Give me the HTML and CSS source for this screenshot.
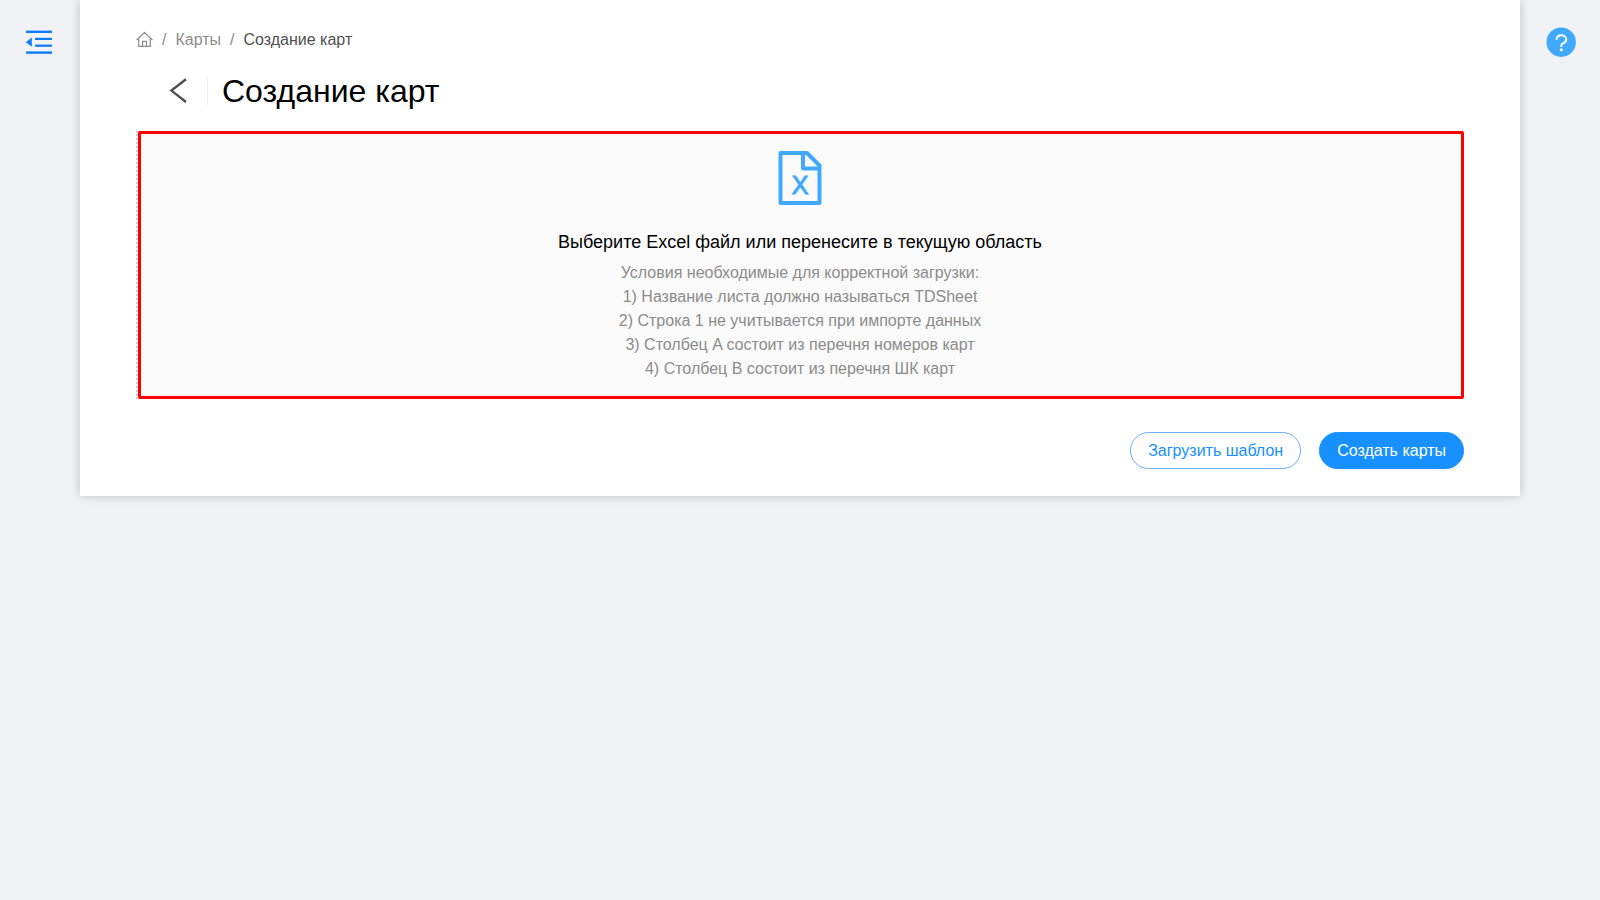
FILE: index.html
```html
<!DOCTYPE html>
<html lang="ru">
<head>
    <meta charset="UTF-8">
    <meta name="viewport" content="width=device-width, initial-scale=1.0">
    <title>Создание карт</title>
    <link rel="stylesheet" href="styles.css">
</head>
<body>
    <div class="layout">
        <aside class="side side-left">
            <button type="button" class="icon-btn" aria-label="Меню">
                <svg width="28" height="26" viewBox="0 0 28 26" fill="#0d7dfb">
                    <rect x="1" y="0.6" width="26" height="2.4"/>
                    <rect x="10" y="7.8" width="17" height="2.2"/>
                    <rect x="10" y="14.6" width="17" height="2.2"/>
                    <rect x="1" y="21.4" width="26" height="2.4"/>
                    <path d="M0.8 12.2L6.8 7.6V16.8z"/>
                </svg>
            </button>
        </aside>

        <main class="card">
            <nav class="breadcrumb">
                <a href="#" class="home" aria-label="Главная">
                    <svg width="17" height="18" viewBox="0 0 17 18" fill="none" stroke="#8c8c8c" stroke-width="1.2">
                        <path d="M2.7 8.4V15.3H14.3V8.4M0.9 8.7L8.5 1.4L16.1 8.7M6.5 15.2V10.4H10.5V15.2" stroke-linecap="round" stroke-linejoin="round"/>
                    </svg>
                </a>
                <span class="separator">/</span>
                <a href="#">Карты</a>
                <span class="separator">/</span>
                <span class="current">Создание карт</span>
            </nav>

            <header class="page-header">
                <button type="button" class="icon-btn back-btn" aria-label="Назад">
                    <svg width="18" height="26" viewBox="0 0 18 26" fill="none" stroke="#505050" stroke-width="2.4">
                        <path d="M17 1.2L2.4 12.6L17 24"/>
                    </svg>
                </button>
                <h1>Создание карт</h1>
            </header>

            <div class="upload">
                <input type="file" id="excel-file" accept=".xls,.xlsx">
                <label for="excel-file" class="upload-area">
                    <svg class="upload-icon" width="44" height="54" viewBox="0 0 44 54" fill="none" stroke="#40a9ff" stroke-width="4">
                        <path d="M2.5 2H29L41.5 14.5V52H2.5z" stroke-linejoin="round"/>
                        <path d="M25 2V17.5H41.5" stroke-linejoin="round"/>
                        <text x="22" y="43" text-anchor="middle" class="upload-letter">X</text>
                    </svg>
                    <span class="upload-text">Выберите Excel файл или перенесите в текущую область</span>
                    <span class="upload-hint">
                        Условия необходимые для корректной загрузки:<br>
                        1) Название листа должно называться TDSheet<br>
                        2) Строка 1 не учитывается при импорте данных<br>
                        3) Столбец A состоит из перечня номеров карт<br>
                        4) Столбец B состоит из перечня ШК карт
                    </span>
                </label>
            </div>

            <div class="actions">
                <button type="button" class="btn">Загрузить шаблон</button>
                <button type="button" class="btn btn-primary">Создать карты</button>
            </div>
        </main>

        <aside class="side side-right">
            <button type="button" class="icon-btn" aria-label="Помощь">
                <svg width="30" height="30" viewBox="0 0 30 30" fill="none">
                    <circle cx="15.2" cy="15.2" r="14.7" fill="#40a9ff"/>
                    <path d="M10.6 12.8C10.6 10 12.6 8.3 15.3 8.3S20.2 10 20.2 12.4C20.2 14.4 19 15.4 17.4 16.1C16 16.7 15.3 17.4 15.3 18.6V20" stroke="#fff" stroke-width="2"/>
                    <circle cx="15.3" cy="22.8" r="1.5" fill="#fff"/>
                </svg>
            </button>
        </aside>
    </div>
</body>
</html>
```

FILE: styles.css
```css
* {
    margin: 0;
    padding: 0;
    box-sizing: border-box;
}

body {
    font-family: "Liberation Sans", Arial, sans-serif;
    font-size: 16px;
    line-height: 24px;
    color: #000;
    background: #f0f2f5;
    min-height: 100vh;
}

a {
    color: inherit;
    text-decoration: none;
}

a:hover {
    color: #40a9ff;
}

svg {
    display: block;
}

.layout {
    display: flex;
    align-items: flex-start;
}

.side {
    flex: 0 0 80px;
    display: flex;
}

.side-left {
    padding: 30px 0 0 25px;
}

.side-right {
    padding: 27px 0 0 26px;
}

.icon-btn {
    background: none;
    border: none;
    cursor: pointer;
}

.card {
    flex: 1;
    min-width: 0;
    padding: 28px 56px 27px;
    background: #fff;
    box-shadow: 0 0 10px rgba(0, 0, 0, 0.2);
}

/* Breadcrumb */
.breadcrumb {
    display: flex;
    align-items: center;
    color: #8c8c8c;
}

.separator {
    margin: 0 9px;
}

.current {
    color: #505050;
}

/* Header */
.page-header {
    display: flex;
    align-items: center;
    margin: 19px 0 20px;
    padding-left: 33px;
}

.back-btn {
    padding: 1px 20px 1px 0;
    border-right: 1px solid #f0f0f0;
}

h1 {
    margin-left: 14px;
    font-size: 32px;
    line-height: 40px;
    font-weight: 400;
}

/* Upload */
.upload {
    border-left: 2px dotted #c5cbf0;
}

.upload input {
    position: absolute;
    opacity: 0;
    pointer-events: none;
}

.upload-area {
    display: flex;
    flex-direction: column;
    align-items: center;
    padding: 17px 2px 15px 0;
    text-align: center;
    background: #fafafa;
    border: 3px solid #f00;
    border-radius: 2px;
    cursor: pointer;
}

.upload-icon {
    margin-bottom: 25px;
}

.upload-letter {
    font-family: "Liberation Sans", Arial, sans-serif;
    font-size: 25px;
    fill: #40a9ff;
    stroke: #40a9ff;
    stroke-width: 1px;
}

.upload-text {
    margin-bottom: 7px;
    font-size: 18px;
}

.upload-hint {
    color: #8c8c8c;
}

/* Buttons */
.actions {
    display: flex;
    justify-content: flex-end;
    gap: 18px;
    margin-top: 33px;
}

.btn {
    height: 37px;
    padding: 0 17px;
    font-family: inherit;
    font-size: 16px;
    color: #1890ff;
    background: #fff;
    border: 1px solid #69b1ff;
    border-radius: 19px;
    box-shadow: 0 2px 0 rgba(0, 0, 0, 0.02);
    cursor: pointer;
}

.btn-primary {
    color: #fff;
    background: #1890ff;
    border-color: #1890ff;
}
```
